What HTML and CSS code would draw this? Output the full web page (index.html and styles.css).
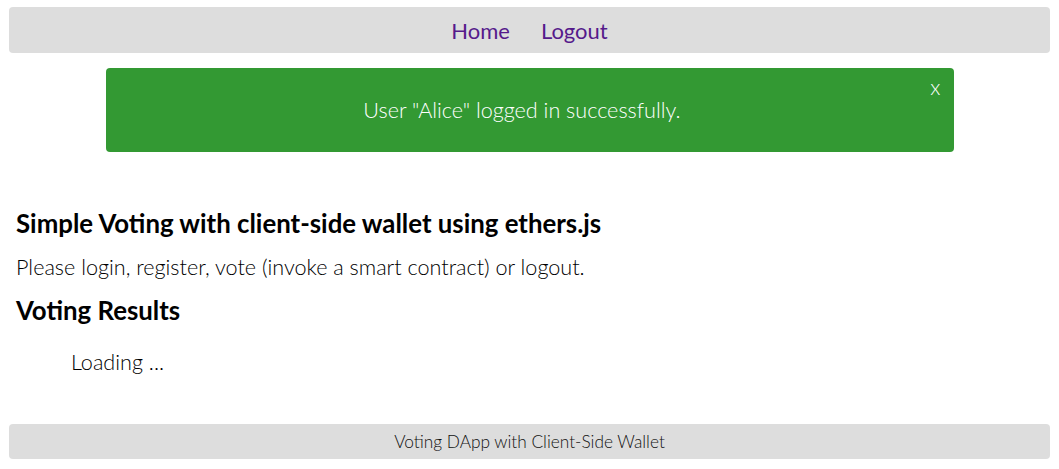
FILE: index.html
```html
<!DOCTYPE html>
<html>
<head>
<meta charset="utf-8">
<link rel="stylesheet" href="styles.css">
</head>
<body>
<header class="topbar">
  <a class="nav-link" href="#">Home</a>
  <a class="nav-link" href="#">Logout</a>
</header>
<div class="alert">
  <span class="alert-text">User "Alice" logged in successfully.</span>
  <span class="alert-close">x</span>
</div>
<main class="content">
  <h1 class="title">Simple Voting with client-side wallet using ethers.js</h1>
  <p class="intro">Please login, register, vote (invoke a smart contract) or logout.</p>
  <h1 class="title results">Voting Results</h1>
  <div class="loading">Loading ...</div>
</main>
<footer class="footer">Voting DApp with Client-Side Wallet</footer>
</body>
</html>
```
FILE: styles.css
```css
html, body {
  margin: 0;
  background: #fff;
}
body {
  padding: 7px 9px 0 9px;
  font-family: Lato, "Open Sans", sans-serif;
  font-weight: 300;
  font-size: 21.6px;
  color: #000;
}
.topbar {
  height: 46px;
  background: #dddddd;
  border-radius: 4px;
  display: flex;
  justify-content: center;
  align-items: center;
  gap: 31px;
}
.nav-link {
  font-weight: 400;
  font-size: 22px;
  color: #551a8b;
  text-decoration: none;
}
.alert {
  position: relative;
  box-sizing: border-box;
  width: 848px;
  height: 84px;
  margin: 15px auto 0 auto;
  padding-right: 15px;
  background: #339933;
  border-radius: 4px;
  color: #fff;
  display: flex;
  justify-content: center;
  align-items: center;
}
.alert-close {
  position: absolute;
  top: 6px;
  right: 13px;
  line-height: 26px;
}
.content {
  padding: 0 7px;
  margin-top: 56px;
}
.title {
  font-weight: 700;
  font-size: 25.8px;
  line-height: 31px;
  margin: 0;
}
.intro {
  line-height: 26px;
  margin: 14.5px 0 15px 0;
}
.loading {
  line-height: 26px;
  margin: 23px 0 0 55px;
}
.footer {
  margin-top: 49.5px;
  height: 35px;
  background: #dddddd;
  border-radius: 4px;
  display: flex;
  justify-content: center;
  align-items: center;
  font-size: 0.8em;
  color: #111;
}
```
